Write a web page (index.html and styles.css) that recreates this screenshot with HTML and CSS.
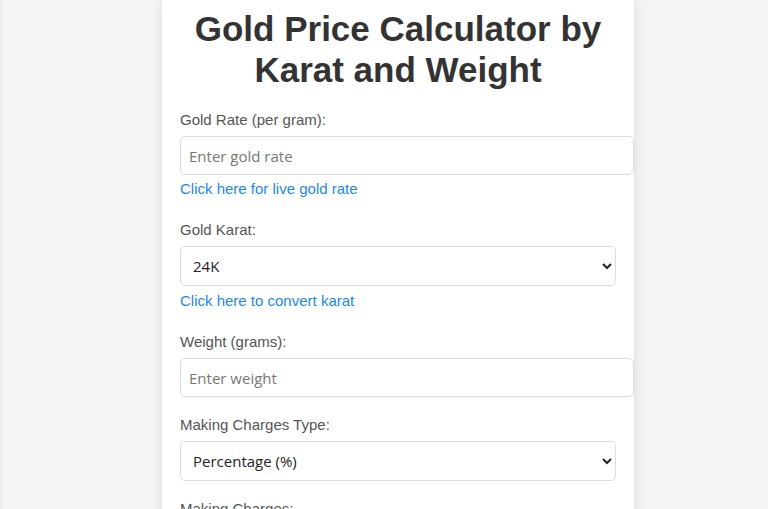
FILE: index.html
```html
<!DOCTYPE html>
<html lang="en">
<head>
    <meta charset="UTF-8">
    <meta name="viewport" content="width=device-width, initial-scale=1.0">
    <title>Gold Price Calculator by Karat and Weight</title>
    <link rel="stylesheet" href="styles.css">
</head>
<body>
    <div class="container">
        <h1>Gold Price Calculator by Karat and Weight</h1>
        <form id="goldForm">
            <div class="group">
                <label for="rate">Gold Rate (per gram):</label>
                <input type="number" id="rate" placeholder="Enter gold rate">
                <a href="#" class="helper">Click here for live gold rate</a>
            </div>
            <div class="group">
                <label for="karat">Gold Karat:</label>
                <select id="karat">
                    <option>24K</option>
                    <option>22K</option>
                    <option>18K</option>
                    <option>14K</option>
                </select>
                <a href="#" class="helper">Click here to convert karat</a>
            </div>
            <div class="group">
                <label for="weight">Weight (grams):</label>
                <input type="number" id="weight" placeholder="Enter weight">
            </div>
            <div class="group">
                <label for="chargeType">Making Charges Type:</label>
                <select id="chargeType">
                    <option>Percentage (%)</option>
                    <option>Fixed Amount</option>
                </select>
            </div>
            <div class="group">
                <label for="charges">Making Charges:</label>
                <input type="number" id="charges" placeholder="Enter making charges">
            </div>
        </form>
    </div>
</body>
</html>
```

FILE: styles.css
```css
html {
    background-color: #f4f4f4;
}
body {
    margin: 0;
    font-family: "Liberation Sans", Arial, sans-serif;
    background-color: #f4f4f4;
    color: #333;
    box-shadow: inset 4px 0 3px -2px rgba(0, 0, 0, 0.04);
}
.container {
    width: 436px;
    min-height: 100vh;
    margin-left: 162px;
    padding: 0 18px;
    background-color: #fff;
    box-shadow: 0 0 10px rgba(0, 0, 0, 0.1);
}
h1 {
    margin: 0;
    padding: 8px 0 21px;
    font-size: 35px;
    line-height: 41px;
    text-align: center;
    color: #333;
}
.group {
    padding-bottom: 19px;
}
label {
    display: block;
    margin-bottom: 8px;
    font-size: 15px;
    line-height: 17px;
    color: #555;
}
input, select {
    display: block;
    box-sizing: border-box;
    font-family: "Open Sans", sans-serif;
    font-size: 15px;
    color: #222;
    background-color: #fff;
    border: 1px solid #ddd;
    border-radius: 5px;
}
input {
    width: calc(100% + 18px);
    height: 39px;
    padding: 0 8px;
}
input::placeholder {
    color: #777;
}
select {
    width: 100%;
    height: 40px;
    padding: 0 8px;
}
.helper {
    display: block;
    margin: 5px 0;
    font-size: 15px;
    line-height: 17px;
    color: #1e88e5;
    text-decoration: none;
}
select + .helper {
    margin-top: 6px;
}
```
